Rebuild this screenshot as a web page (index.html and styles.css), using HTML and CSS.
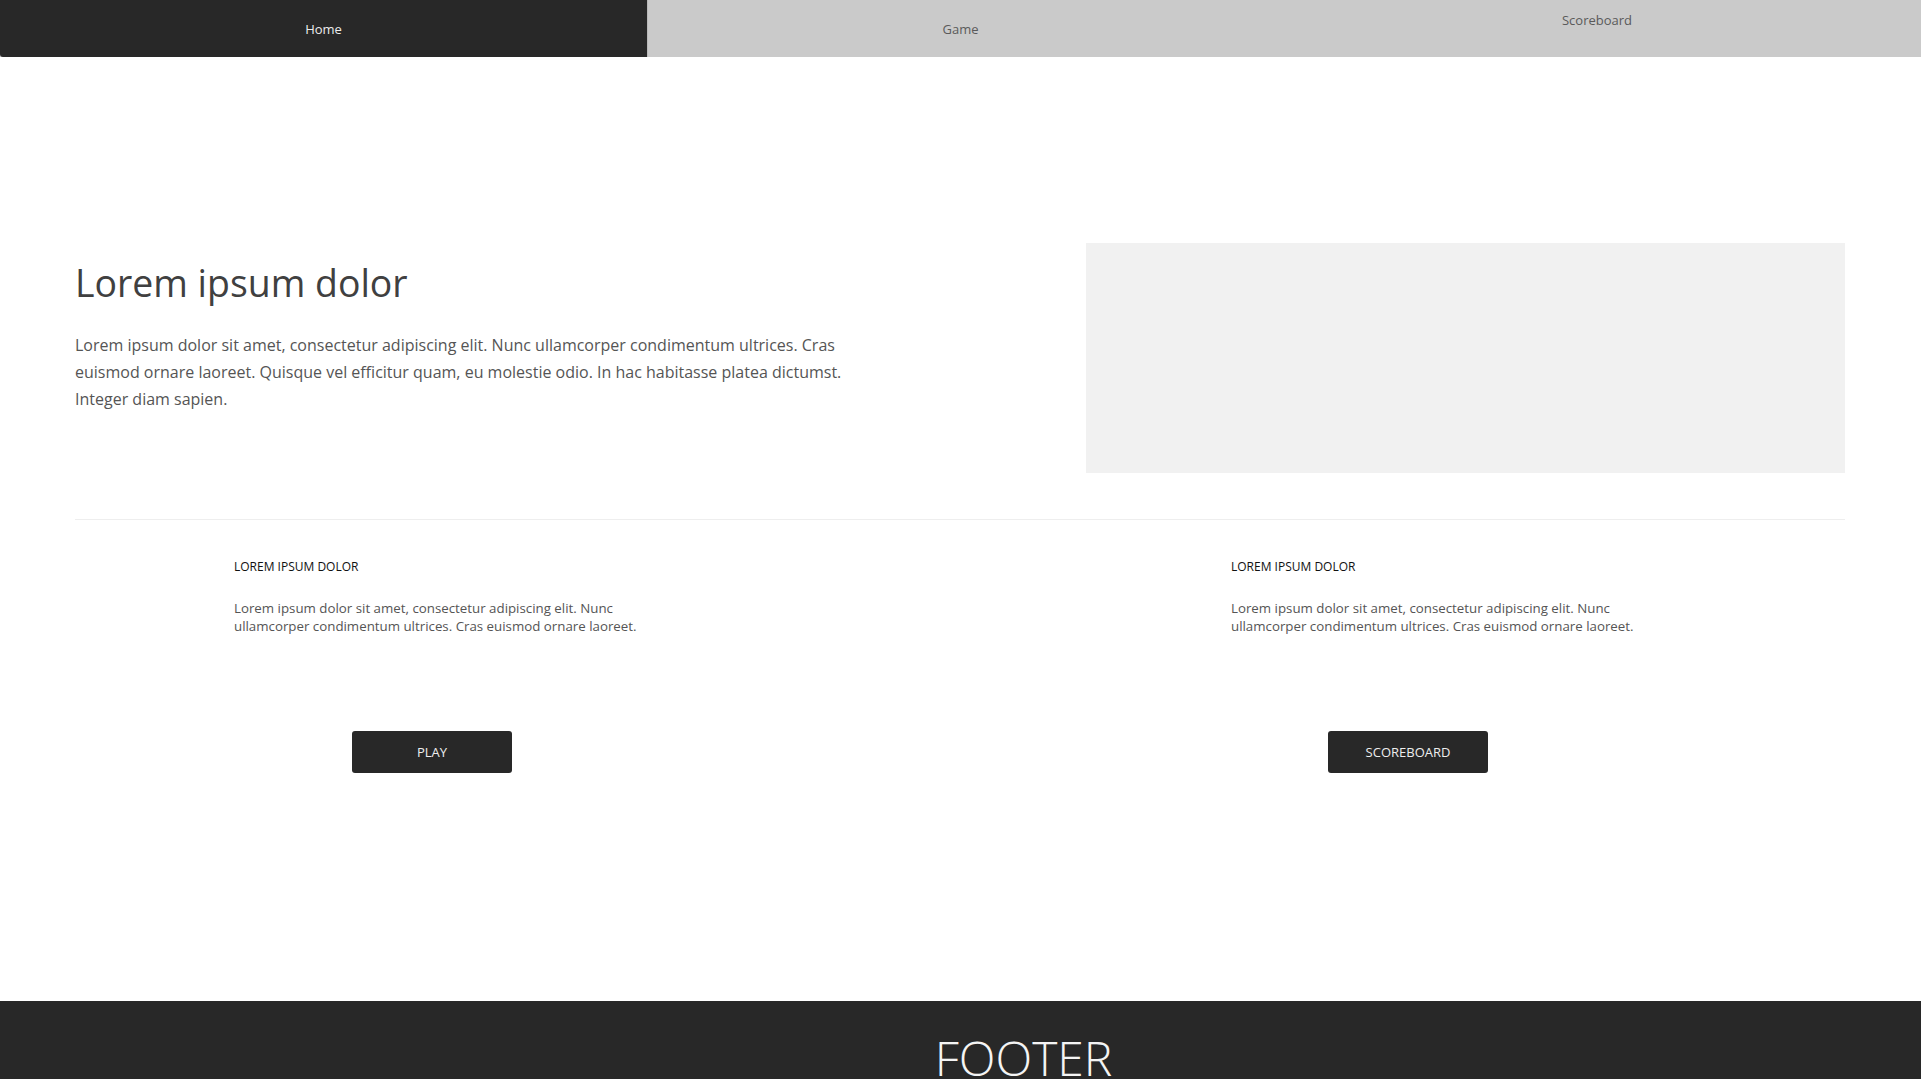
FILE: index.html
```html
<!DOCTYPE html>
<html lang="en">
<head>
<meta charset="utf-8">
<title>Home</title>
<link rel="stylesheet" href="styles.css">
</head>
<body>
<nav class="nav">
  <a class="tab tab-active" href="#">Home</a>
  <a class="tab" href="#">Game</a>
  <a class="tab tab-raised" href="#">Scoreboard</a>
</nav>
<main class="main">
  <section class="hero">
    <div class="hero-text">
      <h1 class="hero-title">Lorem ipsum dolor</h1>
      <p class="hero-copy">Lorem ipsum dolor sit amet, consectetur adipiscing elit. Nunc ullamcorper condimentum ultrices. Cras euismod ornare laoreet. Quisque vel efficitur quam, eu molestie odio. In hac habitasse platea dictumst. Integer diam sapien.</p>
    </div>
    <div class="hero-image"></div>
  </section>
  <hr class="divider">
  <section class="features">
    <div class="feature feature-left">
      <div class="feature-body">
        <h2 class="feature-title">LOREM IPSUM DOLOR</h2>
        <p class="feature-copy">Lorem ipsum dolor sit amet, consectetur adipiscing elit. Nunc ullamcorper condimentum ultrices. Cras euismod ornare laoreet.</p>
      </div>
      <a class="btn" href="#">PLAY</a>
    </div>
    <div class="feature feature-right">
      <div class="feature-body">
        <h2 class="feature-title">LOREM IPSUM DOLOR</h2>
        <p class="feature-copy">Lorem ipsum dolor sit amet, consectetur adipiscing elit. Nunc ullamcorper condimentum ultrices. Cras euismod ornare laoreet.</p>
      </div>
      <a class="btn" href="#">SCOREBOARD</a>
    </div>
  </section>
</main>
<footer class="footer">
  <div class="footer-title">FOOTER</div>
</footer>
</body>
</html>
```

FILE: styles.css
```css
* { box-sizing: border-box; }

html, body {
  margin: 0;
  padding: 0;
  background: #ffffff;
}

body {
  font-family: "Open Sans", "Noto Sans", "Liberation Sans", sans-serif;
  color: #555;
}

.nav {
  display: grid;
  grid-template-columns: 648px 625px 1fr;
  height: 57px;
  background: #cacaca;
}

.tab {
  display: flex;
  align-items: center;
  justify-content: center;
  font-size: 13px;
  color: #5a5a5a;
  text-decoration: none;
  padding-top: 1px;
}

.tab-active {
  background: #282828;
  color: #ececec;
  border-bottom-left-radius: 3px;
  border-right: 1px solid #b9b9b9;
}

.tab-raised {
  align-items: flex-start;
  padding-top: 11px;
}

.main {
  padding: 0 76px 0 75px;
}

.hero {
  display: flex;
  justify-content: space-between;
  align-items: flex-start;
  padding-top: 186px;
}

.hero-text {
  width: 780px;
  padding-top: 18px;
}

.hero-title {
  margin: 0;
  font-size: 37.4px;
  line-height: 43px;
  font-weight: 400;
  color: #404040;
}

.hero-copy {
  margin: 28px 0 0;
  font-size: 16px;
  line-height: 27px;
  color: #555;
}

.hero-image {
  width: 759px;
  height: 230px;
  background: #f1f1f1;
}

.divider {
  margin: 46px 0 0;
  border: 0;
  border-top: 1px solid #eeeeee;
  height: 0;
}

.features {
  display: grid;
  grid-template-columns: 1fr 1fr;
  padding-bottom: 228px;
}

.feature {
  display: flex;
  flex-direction: column;
  align-items: flex-start;
}

.feature-body {
  padding-top: 38px;
}

.feature-left .feature-body { padding-left: 159px; }
.feature-right .feature-body { padding-left: 271px; }

.feature-title {
  margin: 0;
  font-size: 12px;
  line-height: 18px;
  font-weight: 400;
  color: #111;
}

.feature-copy {
  max-width: 440px;
  margin: 23px 0 0;
  font-size: 13.3px;
  line-height: 18px;
  color: #555;
}

.btn {
  display: flex;
  align-items: center;
  justify-content: center;
  width: 160px;
  height: 42px;
  margin-top: 96px;
  background: #282828;
  border-radius: 3px;
  color: #eeeeee;
  font-size: 13px;
  text-decoration: none;
}

.feature-left .btn { margin-left: 277px; }
.feature-right .btn { margin-left: 368px; }

.footer {
  height: 78px;
  background: #282828;
}

.footer-title {
  padding: 37px 0 0 126px;
  text-align: center;
  font-size: 48px;
  line-height: 40px;
  font-weight: 300;
  color: #f4f4f4;
}
```
